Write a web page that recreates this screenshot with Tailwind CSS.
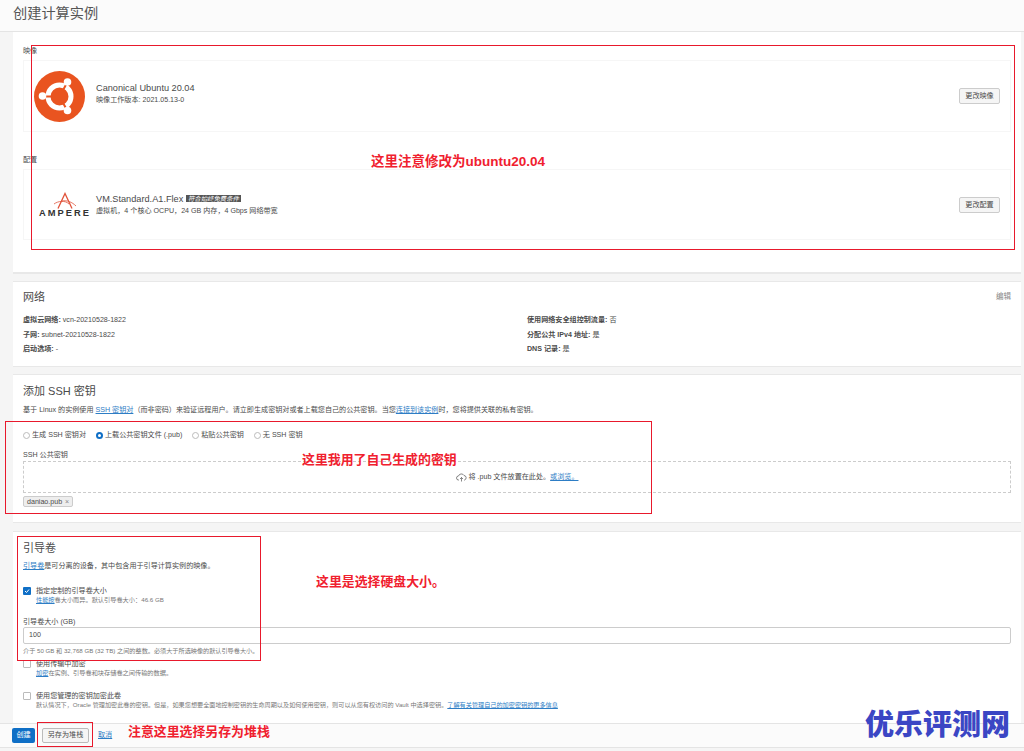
<!DOCTYPE html>
<html lang="zh">
<head>
<meta charset="utf-8">
<script src="https://cdn.jsdelivr.net/npm/@tailwindcss/browser@4"></script>
</head>
<body class="w-[1024px] h-[751px] overflow-hidden bg-[#f5f5f5] text-[#4a4a4a] font-['Liberation_Sans','Noto_Sans_CJK_SC',sans-serif] relative">
<header class="h-[32px] bg-[#fbfbfb] border-b border-[#e4e4e4] pl-[13px] pt-[2px] text-[14.200px] leading-[22px] text-[#555]">创建计算实例</header>
<main class="pl-[13px] pr-[3px] flex flex-col">
  <section class="h-[242px] bg-white border-b-2 border-[#e8e8e8] pl-[10px] pr-[10px] pt-[14px] text-[7.100px]">
    <div class="h-[11px] leading-[11px]">映像</div>
    <div class="h-[72px] mt-[3px] border border-[#f6f6f6] flex items-center pl-[10px] pr-[10px]">
      <svg class="w-[51px] h-[51px] shrink-0" viewBox="0 0 51 51"><circle cx="25.500" cy="25.500" r="25.500" fill="#e95420"/><circle cx="25.500" cy="25.500" r="11.500" fill="none" stroke="#fff" stroke-width="5"/><path d="M11 25.500h8M33 12l-4.500 8M33 39l-4.500-8" stroke="#e95420" stroke-width="2"/><circle cx="8.500" cy="25" r="3.800" fill="#fff"/><circle cx="33.500" cy="11" r="3.800" fill="#fff"/><circle cx="33.500" cy="39.500" r="3.800" fill="#fff"/></svg>
      <div class="ml-[11px] mb-[4px] flex-1"><div class="text-[9.200px] leading-[13px]">Canonical Ubuntu 20.04</div><div class="text-[7.100px] leading-[11px]">映像工作版本: 2021.05.13-0</div></div>
      <button class="w-[41px] h-[16px] bg-[#f5f5f5] border border-[#ccc] rounded-[2px] text-[7.100px] leading-[14px]">更改映像</button>
    </div>
    <div class="h-[11px] leading-[11px] mt-[23px]">配置</div>
    <div class="h-[71px] mt-[3px] border border-[#f6f6f6] flex items-center pl-[15px] pr-[10px]">
      <div class="w-[52px] shrink-0 flex flex-col items-center"><svg class="w-[24px] h-[17px]" viewBox="0 0 24 17" fill="none" stroke="#e0533a"><path d="M5 16.500 12 1.500l7 15" stroke-width="1.300"/><path d="M1 12c4-3 11-4 15 0M9 9c5-1 10 1 14 5" stroke-width=".8"/></svg><div class="text-[9.300px] leading-[9px] font-bold tracking-[2px] whitespace-nowrap text-[#333]">AMPERE</div></div>
      <div class="ml-[5px] flex-1"><div class="text-[9.200px] leading-[13px]">VM.Standard.A1.Flex <span class="inline-block bg-[#555] text-white text-[6.400px] leading-[7px] italic px-[2px] align-[1px]">符合始终免费条件</span></div><div class="text-[7.100px] leading-[11px]">虚拟机，4 个核心 OCPU，24 GB 内存，4 Gbps 网络带宽</div></div>
      <button class="w-[41px] h-[16px] bg-[#f5f5f5] border border-[#ccc] rounded-[2px] text-[7.100px] leading-[14px]">更改配置</button>
    </div>
  </section>
  <section class="h-[86px] mt-[7px] bg-white border-t border-b border-[#e8e8e8] pl-[10px] pr-[10px] pt-[6px] text-[7.100px]">
    <div class="flex justify-between items-center"><h2 class="text-[11px] leading-[18px]">网络</h2><a class="text-[7.500px] text-[#888]">编辑</a></div>
    <div class="grid grid-cols-[504px_1fr] mt-[7px] leading-[14.700px]">
      <div><b>虚拟云网络:</b> vcn-20210528-1822</div><div><b>使用网络安全组控制流量:</b> 否</div>
      <div><b>子网:</b> subnet-20210528-1822</div><div><b>分配公共 IPv4 地址:</b> 是</div>
      <div><b>启动选项:</b> -</div><div><b>DNS 记录:</b> 是</div>
    </div>
  </section>
  <section class="h-[149px] mt-[7px] bg-white border-t border-b border-[#e8e8e8] pl-[10px] pr-[10px] pt-[7px] text-[7.100px]">
    <h2 class="text-[11px] leading-[18px]">添加 SSH 密钥</h2>
    <p class="mt-[5px] leading-[11px]">基于 Linux 的实例使用 <a class="text-[#2d7dc5] underline">SSH 密钥对</a>（而非密码）来验证远程用户。请立即生成密钥对或者上载您自己的公共密钥。当您<a class="text-[#2d7dc5] underline">连接到该实例</a>时，您将提供关联的私有密钥。</p>
    <div class="flex items-center mt-[13px] h-[12px] leading-[12px]">
      <span class="flex items-center gap-[2px]"><i class="w-[7px] h-[7px] rounded-full border border-[#bbb]"></i>生成 SSH 密钥对</span>
      <span class="flex items-center gap-[2px] ml-[10px]"><i class="w-[7px] h-[7px] rounded-full border-[2px] border-[#0f6fc6]"></i>上载公共密钥文件 (.pub)</span>
      <span class="flex items-center gap-[2px] ml-[10px]"><i class="w-[7px] h-[7px] rounded-full border border-[#bbb]"></i>粘贴公共密钥</span>
      <span class="flex items-center gap-[2px] ml-[10px]"><i class="w-[7px] h-[7px] rounded-full border border-[#bbb]"></i>无 SSH 密钥</span>
    </div>
    <div class="mt-[9px] leading-[10px]">SSH 公共密钥</div>
    <div class="h-[32px] mt-[1px] border border-dashed border-[#ccc] flex items-center justify-center pt-[1px]">
      <svg class="w-[11px] h-[9px] mr-[2px]" viewBox="0 0 11 9" fill="none" stroke="#555" stroke-width=".7"><path d="M3 7H2.500a2 2 0 0 1 0-4 3 3 0 0 1 5.500-.5A2.300 2.300 0 0 1 8.500 7H8M5.500 8.500V4.500M4 6l1.500-1.500L7 6"/></svg>将 .pub 文件放置在此处。<a class="text-[#2d7dc5] underline">或浏览。</a>
    </div>
    <div class="mt-[3px] w-[50px] h-[11px] bg-[#eee] border border-[#ccc] rounded-[2px] flex items-center pl-[3px] text-[7.100px] leading-[8px]">daniao.pub<span class="ml-[3px] text-[#888]">×</span></div>
  </section>
  <section class="h-[193px] mt-[8px] bg-white border-t border-[#e8e8e8] pl-[10px] pr-[10px] pt-[7px] text-[7.100px]">
    <h2 class="text-[11px] leading-[18px]">引导卷</h2>
    <p class="mt-[4px] leading-[11px]"><a class="text-[#2d7dc5] underline">引导卷</a>是可分离的设备，其中包含用于引导计算实例的映像。</p>
    <div class="flex mt-[14px]"><i class="w-[8px] h-[8px] mt-[1px] bg-[#0f6fc6] rounded-[1px] flex items-center justify-center"><svg class="w-[6px] h-[6px]" viewBox="0 0 6 6" fill="none" stroke="#fff"><path d="M1 3l1.500 1.500L5 1.500"/></svg></i><div class="ml-[5px]"><div class="leading-[10px]">指定定制的引导卷大小</div><div class="text-[6.200px] leading-[8px] text-[#777]"><a class="text-[#2d7dc5] underline">性能按</a>卷大小而异。默认引导卷大小：46.6 GB</div></div></div>
    <div class="mt-[13px] leading-[10px]">引导卷大小 (GB)</div>
    <div class="h-[17px] border border-[#ccc] rounded-[2px] pl-[5px] flex items-center">100</div>
    <div class="mt-[2px] text-[6.150px] leading-[9px] text-[#777]">介于 50 GB 和 32,768 GB (32 TB) 之间的整数。必须大于所选映像的默认引导卷大小。</div>
    <div class="flex mt-[4px]"><i class="w-[8px] h-[8px] mt-[1px] border border-[#bbb] rounded-[1px]"></i><div class="ml-[5px]"><div class="leading-[10px]">使用传输中加密</div><div class="text-[6.200px] leading-[8px] text-[#777]"><a class="text-[#2d7dc5] underline">加密</a>在实例、引导卷和块存储卷之间传输的数据。</div></div></div>
    <div class="flex mt-[14px]"><i class="w-[8px] h-[8px] mt-[1px] border border-[#bbb] rounded-[1px]"></i><div class="ml-[5px]"><div class="leading-[10px]">使用您管理的密钥加密此卷</div><div class="text-[6.150px] leading-[8px] text-[#777]">默认情况下，Oracle 管理加密此卷的密钥。但是，如果您想要全面地控制密钥的生命周期以及如何使用密钥，则可以从您有权访问的 Vault 中选择密钥。<a class="text-[#2d7dc5] underline">了解有关管理自己的加密密钥的更多信息</a></div></div></div>
  </section>
</main>
<footer class="absolute left-0 top-[723px] w-[1024px] h-[25px] bg-[#fbfbfb] border-t border-b border-[#e4e4e4] pl-[12px] flex items-center text-[7.100px]">
  <button class="w-[23px] h-[15px] bg-[#0f6fc6] text-white rounded-[2px]">创建</button>
  <button class="w-[47px] h-[15px] ml-[7px] bg-[#f5f5f5] border border-[#bbb] rounded-[2px]">另存为堆栈</button>
  <a class="ml-[9px] text-[#2d7dc5] underline">取消</a>
</footer>
<div class="absolute left-[31px] top-[45px] w-[984px] h-[205px] border border-[#e8192c]"></div>
<div class="absolute left-[5px] top-[421px] w-[647px] h-[93px] border border-[#e8192c]"></div>
<div class="absolute left-[17px] top-[536px] w-[244px] h-[125px] border border-[#e8192c]"></div>
<div class="absolute left-[37px] top-[722px] w-[56px] h-[25px] border border-[#e8192c]"></div>
<div class="absolute left-[371px] top-[154px] text-[13.500px] leading-[16px] font-bold text-[#f0202e]">这里注意修改为ubuntu20.04</div>
<div class="absolute left-[302px] top-[452px] text-[12.900px] leading-[16px] font-bold text-[#f0202e]">这里我用了自己生成的密钥</div>
<div class="absolute left-[316px] top-[574px] text-[12.900px] leading-[16px] font-bold text-[#f0202e]">这里是选择硬盘大小。</div>
<div class="absolute left-[128px] top-[724px] text-[12.900px] leading-[16px] font-bold text-[#f0202e]">注意这里选择另存为堆栈</div>
<div class="absolute left-[865px] top-[708px] text-[29px] leading-[34px] font-black text-[#3b46c4] whitespace-nowrap">优乐评测网</div>
</body>
</html>
